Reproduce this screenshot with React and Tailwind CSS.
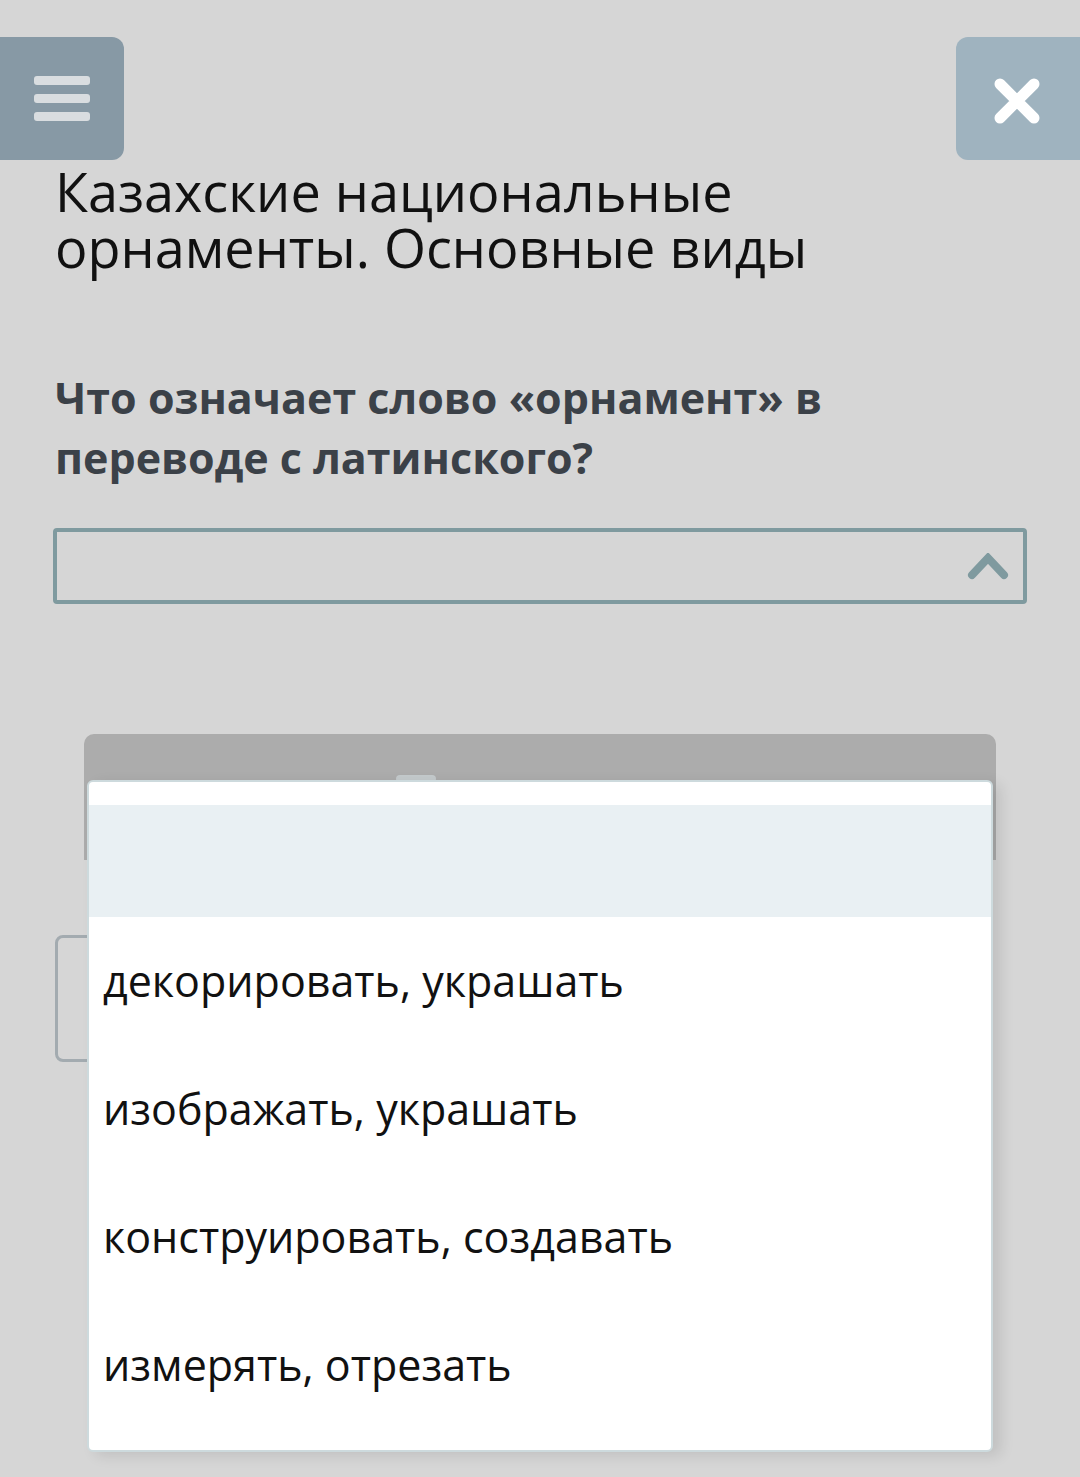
import React from "react";

export default function App() {
  const options = [
    "декорировать, украшать",
    "изображать, украшать",
    "конструировать, создавать",
    "измерять, отрезать",
  ];
  return (
    <div
      className="relative w-[1080px] h-[1477px] overflow-hidden bg-[#d6d6d6]"
      style={{ fontFamily: '"Open Sans", "Noto Sans", sans-serif' }}
    >
      {/* top buttons */}
      <div className="flex justify-between pt-[37px]">
        <div className="w-[124px] h-[123px] bg-[#8799a5] rounded-r-[12px] flex flex-col justify-center gap-[9px] pl-[34px]">
          <div className="w-[56px] h-[9px] rounded-[3px] bg-[#d9dde0]" />
          <div className="w-[56px] h-[9px] rounded-[3px] bg-[#d9dde0]" />
          <div className="w-[56px] h-[9px] rounded-[3px] bg-[#d9dde0]" />
        </div>
        <div className="w-[124px] h-[123px] bg-[#9fb3bf] rounded-l-[12px] flex items-center justify-center">
          <svg width="50" height="50" viewBox="0 0 50 50" className="ml-[-2px] mt-[4px]">
            <path d="M8 8 L42 42 M42 8 L8 42" stroke="#ffffff" strokeWidth="11" strokeLinecap="round" />
          </svg>
        </div>
      </div>

      <div className="px-[55px]">
        <h1 className="mt-[3px] text-[54px] leading-[56px] text-[#111111] font-normal">
          Казахские национальные орнаменты. Основные виды
        </h1>
        <p className="mt-[93px] text-[43px] leading-[60px] font-bold text-[#3b4148] pr-[150px]">
          Что означает слово «орнамент» в переводе с латинского?
        </p>
        <div className="mt-[40px] ml-[-2px] mr-[-2px] h-[76px] border-[4px] border-[#7f9a9f] rounded-[4px] flex items-center justify-end pr-[14px]">
          <svg width="42" height="28" viewBox="0 0 42 28" className="mt-[2px]">
            <path d="M5 22 L21 5 L37 22" fill="none" stroke="#7f9a9f" strokeWidth="8" strokeLinejoin="miter" strokeLinecap="round" />
          </svg>
        </div>
        <div className="mt-[331px] w-[800px] h-[127px] border-[3px] border-[#a3abb0] rounded-[8px]" />
      </div>

      {/* modal header behind dropdown */}
      <div className="absolute left-[84px] top-[734px] w-[912px] h-[126px] bg-[#acacac] rounded-t-[10px]" />
      <div className="absolute left-[396px] top-[775px] w-[40px] h-[8px] rounded-full bg-[#c4cacc]" />

      {/* dropdown list */}
      <div className="absolute left-[87px] top-[780px] w-[906px] h-[672px] bg-white border-[2px] border-[#cddadd] rounded-[6px] shadow-[8px_4px_14px_rgba(0,0,0,0.1)] pt-[23px] flex flex-col">
        <div className="h-[112px] bg-[#e9f0f3]" />
        {options.map((o) => (
          <div key={o} className="h-[128px] flex items-center pl-[14px] text-[43px] text-[#111111]">
            {o}
          </div>
        ))}
      </div>
    </div>
  );
}
